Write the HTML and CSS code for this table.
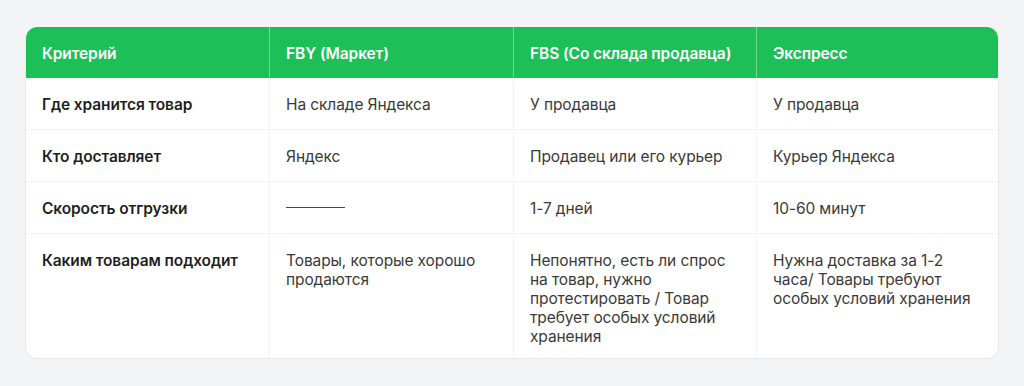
FILE: index.html
```html
<!DOCTYPE html>
<html lang="ru">
<head>
<meta charset="utf-8">
<link rel="stylesheet" href="styles.css">
</head>
<body>
<div class="card">
  <div class="cell head">Критерий</div>
  <div class="cell head">FBY (Маркет)</div>
  <div class="cell head">FBS (Со склада продавца)</div>
  <div class="cell head">Экспресс</div>

  <div class="cell key">Где хранится товар</div>
  <div class="cell">На складе Яндекса</div>
  <div class="cell">У продавца</div>
  <div class="cell">У продавца</div>

  <div class="cell key">Кто доставляет</div>
  <div class="cell">Яндекс</div>
  <div class="cell">Продавец или его курьер</div>
  <div class="cell">Курьер Яндекса</div>

  <div class="cell key">Скорость отгрузки</div>
  <div class="cell"><span class="dash"></span></div>
  <div class="cell">1-7 дней</div>
  <div class="cell">10-60 минут</div>

  <div class="cell key last">Каким товарам подходит</div>
  <div class="cell last">Товары, которые хорошо продаются</div>
  <div class="cell last">Непонятно, есть ли спрос на товар, нужно протестировать / Товар требует особых условий хранения</div>
  <div class="cell last">Нужна доставка за 1-2 часа/ Товары требуют особых условий хранения</div>
</div>
</body>
</html>
```

FILE: styles.css
```css
* { box-sizing: border-box; }
html, body { margin: 0; }
body {
  background: #f3f4f6;
  font-family: Inter, "Noto Sans", sans-serif;
  padding: 27px 25px 0 25px;
  width: 1024px;
  height: 386px;
  overflow: hidden;
}
.card {
  width: 974px;
  background: #fff;
  border: 1px solid #e6e8eb;
  border-top: none;
  border-radius: 12px;
  overflow: hidden;
  display: grid;
  grid-template-columns: 243px 244px 243px 1fr;
  grid-template-rows: 51px 52px 52px 52px 124px;
}
.cell {
  padding: 17px 16px 0 16px;
  font-size: 15.5px;
  line-height: 19px;
  color: #3a3a3a;
  border-bottom: 1px solid #f2f3f4;
  border-left: 1px solid #f2f3f4;
  letter-spacing: -0.1px;
}
.cell:nth-child(4n+1) { border-left: none; }
.cell.last { border-bottom: none; }
.head {
  background: #1cc056;
  color: #fff;
  font-weight: 600;
  display: flex;
  align-items: center;
  padding-top: 2px;
  border-bottom: none;
  border-left: 1px solid #72d594;
}
.key {
  font-weight: 600;
  color: #1f1f1f;
}
.dash {
  display: inline-block;
  width: 59px;
  height: 1px;
  background: #444;
  vertical-align: middle;
  position: relative;
  top: -2px;
}
```
